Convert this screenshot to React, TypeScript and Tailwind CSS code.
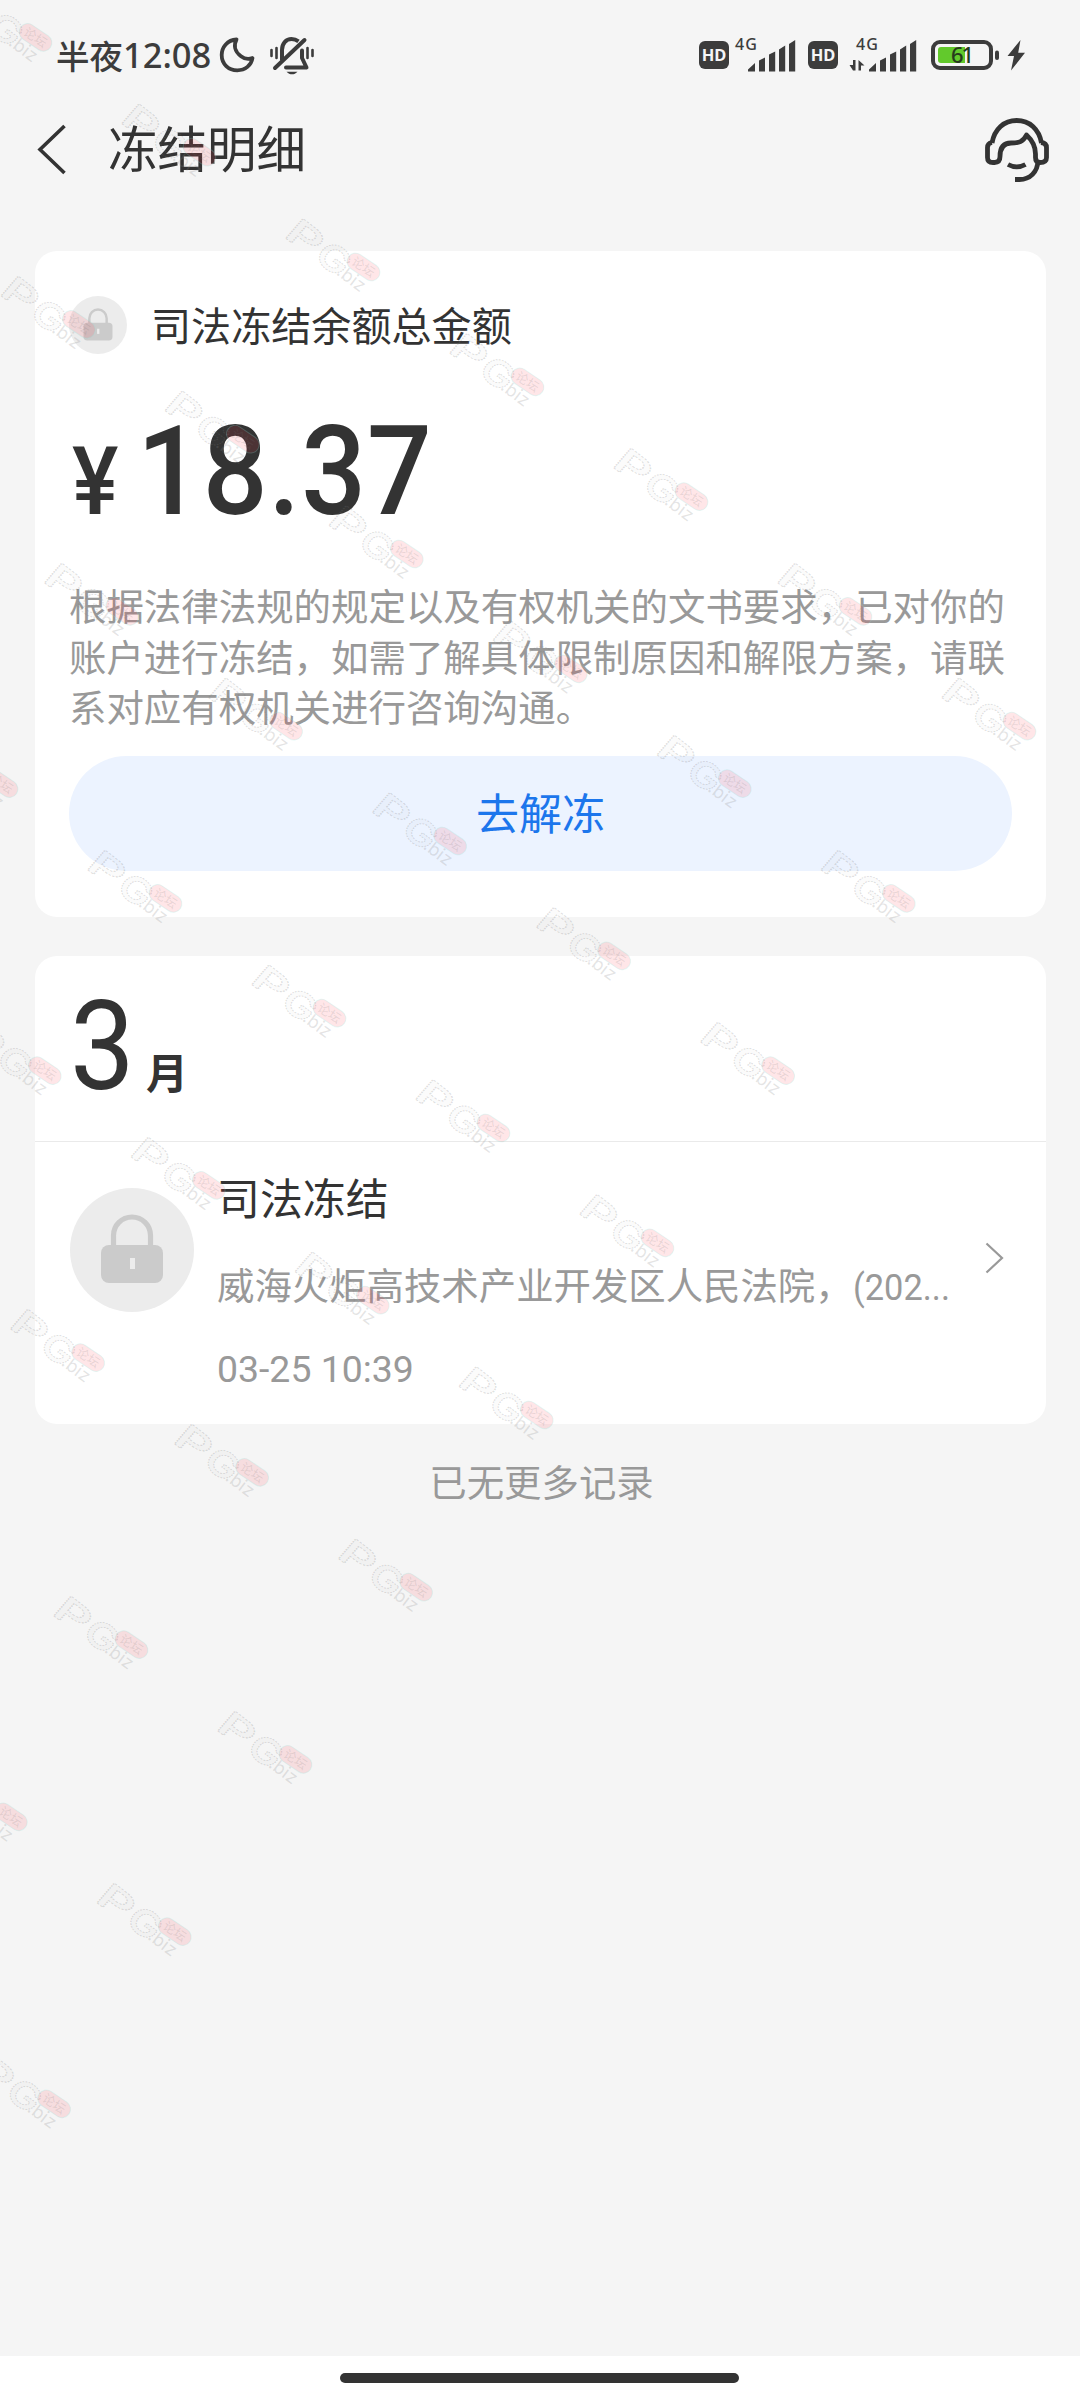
import React from 'react';

interface FreezeRecord {
  id: number;
  title: string;
  court: string;
  caseNo: string;
  time: string;
}

const records: FreezeRecord[] = [
  { id: 1, title: '司法冻结', court: '威海火炬高技术产业开发区人民法院，', caseNo: '(202...', time: '03-25 10:39' },
];

const description = [
  '根据法律法规的规定以及有权机关的文书要求，已对你的',
  '账户进行冻结，如需了解具体限制原因和解限方案，请联',
  '系对应有权机关进行咨询沟通。',
];

// Watermark grid: two skewed axes starting from one origin
const marks: { x: number; y: number }[] = [];
for (let j = 0; j <= 8; j++) {
  for (let i = -2; i <= 4; i++) {
    const x = 285 + i * 164 - j * 120.67;
    const y = 216 + i * 114.8 + j * 172.2;
    if (x > -95 && x < 1080) marks.push({ x, y });
  }
}

const Watermark: React.FC = () => (
  <svg className="absolute inset-0 pointer-events-none" width="1080" height="2400" viewBox="0 0 1080 2400">
    <defs>
      <g id="mark">
        <g
          fontFamily="Inter, 'Liberation Sans', sans-serif"
          fontWeight="600"
          fill="#888"
          fillOpacity="0.04"
          stroke="#777"
          strokeOpacity="0.24"
          strokeWidth="1"
          strokeDasharray="1.6 1"
        >
          <text transform="translate(-2.5 20) rotate(37) skewX(-4)" fontSize="36" textLength="36" lengthAdjust="spacingAndGlyphs">P</text>
          <text transform="translate(27.500 42.500) rotate(37) skewX(-4)" fontSize="36" textLength="33" lengthAdjust="spacingAndGlyphs">G</text>
        </g>
        <text
          transform="translate(50.500 58) rotate(37)"
          fontFamily="Inter, 'Liberation Sans', sans-serif"
          fontSize="18"
          fill="#888"
          fillOpacity="0.22"
          textLength="31"
        >
          .biz
        </text>
        <g transform="translate(78.500 51) rotate(34)">
          <rect x="-18" y="-8.500" width="36" height="17" rx="8.500" fill="#ff3b46" fillOpacity="0.125" stroke="#8fe6e0" strokeOpacity="0.22" />
          <text x="-12.500" y="4.500" fontFamily="'Noto Sans CJK SC', sans-serif" fontSize="12.500" fill="#777" fillOpacity="0.18">
            论坛
          </text>
        </g>
      </g>
    </defs>
    {marks.map((m, idx) => (
      <use key={idx} href="#mark" x={m.x} y={m.y} />
    ))}
  </svg>
);

const HdBadge: React.FC = () => (
  <div className="w-[30px] h-[28px] rounded-[6px] bg-[#3c3c3c] text-[#f5f5f5] flex items-center justify-center font-['Noto_Sans','Noto_Sans_CJK_SC',sans-serif] text-[16.5px] font-bold leading-none">
    HD
  </div>
);

const Signal: React.FC<{ data?: boolean }> = ({ data }) => (
  <svg className="overflow-visible" width="70" height="34" viewBox="0 0 70 34" fill="#3c3c3c">
    <text x={data ? 8 : 1} y="12" fontFamily="'Noto Sans', sans-serif" fontSize="16" fontWeight="500" textLength="22">
      4G
    </text>
    {data && <path d="M7.500 22v10.500H5L1.500 27h3.500V22zM10.500 32.500V22l6 5.500h-3.500v5z" />}
    <g transform={data ? 'translate(21 0)' : 'translate(14 0)'}>
      <path d="M0 33.500v-2l7-6.500v8.500zM11 33.500V22.500l6-3v14zM21 33.500V16.500l6.200-3v20zM31 33.500V11.500l6.200-4v26zM41 33.500V6l6.200-4v31.500z" />
    </g>
  </svg>
);

const StatusBar: React.FC = () => (
  <div className="h-[108px] flex items-start pl-[56px] text-[#3c3c3c]">
    <div className="mt-[31px] flex items-center h-[48px] w-[158px] font-medium whitespace-nowrap">
      <span className="text-[33.5px] font-['Noto_Sans_CJK_SC',sans-serif]">半夜</span>
      <span className="text-[34.5px] font-['Noto_Sans','Noto_Sans_CJK_SC',sans-serif]">12:08</span>
    </div>
    <svg className="mt-[36px] ml-[4px]" width="40" height="40" viewBox="0 0 40 40" fill="none" stroke="#3c3c3c" strokeWidth="3.8" strokeLinejoin="round">
      <path d="M18.500 3.500C9.500 4 3.700 11 3.700 19c0 9 6.800 15.300 15.600 15.300 8 0 14-5 15.200-12.300-3.500 1.300-8 1-11.500-1.800C16.500 15.500 15.500 9 18.500 3.500Z" />
    </svg>
    <svg className="mt-[36px] ml-[11px]" width="46" height="40" viewBox="0 0 46 40" fill="none" stroke="#3c3c3c" strokeWidth="4" strokeLinecap="round" strokeLinejoin="round">
      <path d="M6 32 35.500 4" />
      <path d="M13 24.500V14C13 7.500 17 3 22.500 3c3 0 5 .8 7 2.300" strokeLinecap="butt" />
      <path d="M33 14.500v7.500l4.500 9.500H17" />
      <path d="M17.500 35.800c3 3.400 8 3.400 11 0z" fill="#3c3c3c" stroke="none" />
      <path d="M2.500 14v6M7.500 12v10M38.500 12v10M43.500 14v6" strokeWidth="2.600" />
    </svg>
    <div className="ml-auto mr-[52px] mt-[38px] flex items-start">
      <div className="mt-[3px]"><HdBadge /></div>
      <div className="ml-[5px]"><Signal /></div>
      <div className="ml-[4px] mt-[3px]"><HdBadge /></div>
      <div className="ml-[10px]"><Signal data /></div>
      <svg className="ml-[10px]" width="100" height="36" viewBox="0 0 100 36">
        <rect x="5" y="4" width="58" height="26" rx="7" fill="none" stroke="#3c3c3c" strokeWidth="4" />
        <path d="M13 9h24v16H13q-3 0-3-3V12q0-3 3-3Z" fill="#62c92c" />
        <rect x="67" y="12.500" width="4" height="9.500" rx="2" fill="#3c3c3c" />
        <text x="23" y="25" fontFamily="'Noto Sans', sans-serif" fontSize="22" fontWeight="500" fill="#263a1c" textLength="23">
          61
        </text>
        <path d="M92.500 2 79.500 18h6.500L83 32.500 97 14.800h-6.800z" fill="#3c3c3c" />
      </svg>
    </div>
  </div>
);

const NavBar: React.FC = () => (
  <div className="h-[143px] flex items-start pl-[35px] pr-[29px]">
    <svg className="mt-[16px]" width="34" height="51" viewBox="0 0 34 51" fill="none" stroke="#333" strokeWidth="3.600">
      <path d="M29.500 2 5 25.500l24.500 23.500" />
    </svg>
    <h1 className="ml-[39px] mt-[7px] h-[72px] leading-[72px] text-[49.500px] font-normal">冻结明细</h1>
    <svg className="ml-auto mt-[8px]" width="68" height="70" viewBox="0 0 68 70" fill="none" stroke="#333" strokeWidth="4.800" strokeLinejoin="round">
      <path d="M9 27C11.500 13 21 4.500 33.700 4.500S56 13 58.500 27" />
      <path d="M9 26.500c-3 .5-4.500 2-4.500 5v10c0 3.500 2 5 5.500 5h1.500c4 0 5.500-2 5.500-6 0-9 4-13.500 11-13.500 8 0 12-1 15.500-8 6 5.500 9 11.500 9 19v3.500c0 3.300 1.500 5 4.500 5s6.500-1 6.500-5v-10c0-3-1.500-4.500-5.500-5" />
      <path d="M55 45c-.5 11-8 18.500-18.500 18.500H32" />
      <path d="M25 48.500c5.500 3 12 3 17.500 0" />
    </svg>
  </div>
);

const LockIcon: React.FC<{ size: number }> = ({ size }) => (
  <svg className="shrink-0" width={size} height={size} viewBox="0 0 124 124">
    <circle cx="62" cy="62" r="62" fill="#ececec" />
    <path d="M43.500 60V47.500a18.500 18.500 0 0 1 37 0V60" fill="none" stroke="#cbcbcb" strokeWidth="5.200" />
    <rect x="31" y="57" width="62" height="38" rx="8" fill="#cbcbcb" />
    <rect x="60" y="70" width="5" height="11" fill="#ececec" />
  </svg>
);

const SummaryCard: React.FC = () => (
  <section className="h-[666px] rounded-[22px] bg-white pl-[34px] pr-[34px] pt-[45px] flex flex-col">
    <div className="flex items-center h-[58px]">
      <LockIcon size={58} />
      <span className="ml-[24px] mt-[5px] text-[40.1px] leading-[58px]">司法冻结余额总金额</span>
    </div>
    <div className="h-[218px] flex items-baseline pt-[45px] pl-[3px] font-['Roboto','Noto_Sans_CJK_SC',sans-serif] font-medium whitespace-nowrap">
      <span className="w-[65px] text-[94px] leading-[146px] origin-left scale-x-[0.93]">¥</span>
      <span className="text-[124px] leading-[146px] tracking-[1px] origin-left scale-x-[0.92]">18.37</span>
    </div>
    <div className="h-[184px] text-[37.450px] leading-[50.500px] text-[#999] whitespace-nowrap pt-[11px]">
      {description.map((line) => (
        <p key={line}>{line}</p>
      ))}
    </div>
    <button className="h-[115px] shrink-0 rounded-full bg-[#ecf3ff] text-[#1c76ec] text-[43px] leading-none pt-[3px]">去解冻</button>
  </section>
);

const RecordRow: React.FC<{ record: FreezeRecord }> = ({ record }) => (
  <div className="flex items-start pl-[35px] pt-[46px]">
    <LockIcon size={124} />
    <div className="ml-[23px] -mt-[19px] w-[742px] whitespace-nowrap">
      <div className="text-[42.900px] leading-[62px]">{record.title}</div>
      <div className="mt-[29px] text-[37.400px] leading-[54px] text-[#999] flex items-baseline">
        <span>{record.court}</span>
        <span className="origin-left scale-x-[0.92]">{record.caseNo}</span>
      </div>
      <div className="mt-[30px] text-[37.400px] leading-[50px] text-[#999]">{record.time}</div>
    </div>
    <svg className="ml-[25px] mt-[53px]" width="22" height="34" viewBox="0 0 22 34" fill="none" stroke="#999" strokeWidth="2.200">
      <path d="M2.500 2.500 18 17 2.500 31.500" />
    </svg>
  </div>
);

export default function App() {
  return (
    <div className="relative w-[1080px] h-[2400px] overflow-hidden bg-[#f5f5f5] text-[#333] font-['Roboto','Noto_Sans_CJK_SC',sans-serif] flex flex-col">
      <StatusBar />
      <NavBar />
      <main className="pl-[35px] pr-[34px] flex-1 flex flex-col">
        <SummaryCard />
        <section className="mt-[39px] h-[468px] rounded-[22px] bg-white overflow-hidden">
          <div className="h-[186px] border-b border-[#eaeaea] flex items-baseline pl-[35px] pt-[18px]">
            <span className="w-[76px] text-[124px] leading-[146px] origin-left scale-x-[0.93]">3</span>
            <span className="text-[42px] font-bold">月</span>
          </div>
          {records.map((record) => (
            <RecordRow key={record.id} record={record} />
          ))}
        </section>
        <p className="mt-[33px] pl-[2px] text-center text-[37.400px] leading-[54px] text-[#999]">已无更多记录</p>
      </main>
      <footer className="h-[44px] bg-white flex pl-[340px] pt-[17px]">
        <div className="w-[399px] h-[10px] rounded-full bg-[#333]" />
      </footer>
      <Watermark />
    </div>
  );
}
